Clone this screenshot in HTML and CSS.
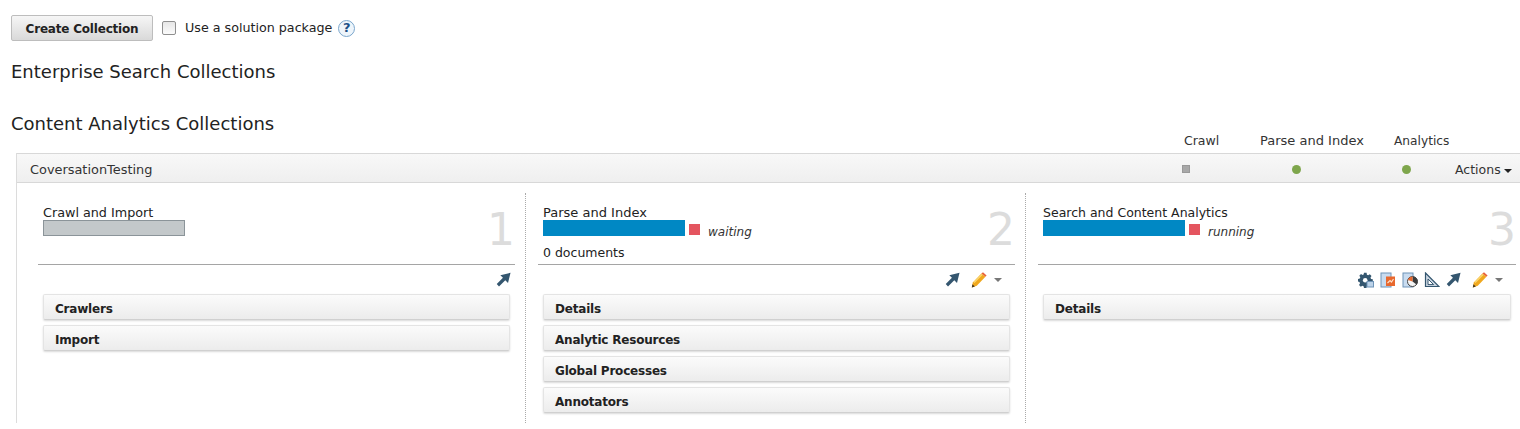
FILE: index.html
```html
<!DOCTYPE html>
<html lang="en">
<head>
<meta charset="utf-8">
<title>Collections</title>
<link rel="stylesheet" href="styles.css">
</head>
<body>
<svg class="defs" width="0" height="0" aria-hidden="true">
  <symbol id="arrow" viewBox="0 0 16 16"><path d="M15.5 .8 L4.6 3.4 L7.4 6.2 L.8 12.9 L3.2 15.4 L9.9 8.7 L12.8 11.6 Z" fill="#34566f"/></symbol>
  <symbol id="pencil" viewBox="0 0 16 16"><path d="M.8 15.4 L1.8 10.4 L10.4 1.4 L14.4 4.8 L5.8 13.8 Z" fill="#f0a81e"/><path d="M10.4 1.4 L12 .3 L15.6 3.4 L14.4 4.8 Z" fill="#e8643c"/><path d="M.8 15.4 L1.4 12.2 L3.9 14.6 Z" fill="#4a3a20"/><path d="M3 10.6 L11 2.6" stroke="#fbd971" stroke-width="1.4"/></symbol>
  <symbol id="gear" viewBox="0 0 16 16"><path d="M6 .8h2.6l.3 1.9 1.3.6 1.6-1 1.7 1.8-1 1.5.5 1.3 1.8.4v2.5l-1.8.3-.5 1.3 1 1.6-1.8 1.8-1.6-1-1.2.5-.4 1.8H6l-.4-1.8-1.3-.5-1.5 1-1.8-1.8 1-1.6-.5-1.3L0 9.5V7l1.8-.4.5-1.3-1-1.5L3 2l1.6 1 1-.5z" fill="#34566f"/><circle cx="7.2" cy="8.2" r="2.3" fill="#fff"/><rect x="9" y="9.5" width="6.5" height="5.5" fill="#bcd2e8" stroke="#6f94b8"/></symbol>
  <symbol id="doc1" viewBox="0 0 16 16"><rect x="1" y="1" width="10" height="14" fill="#c9dcf0" stroke="#6f94b8"/><rect x="6" y="4.5" width="9" height="9.5" fill="#e8682e"/><path d="M7.5 11 L10 8.5 L11.5 10 L13.5 7" stroke="#fde0c8" stroke-width="1.2" fill="none"/></symbol>
  <symbol id="doc2" viewBox="0 0 16 16"><rect x="1" y="1" width="10" height="14" fill="#c9dcf0" stroke="#6f94b8"/><circle cx="10.5" cy="9.5" r="5" fill="#f5f5f5" stroke="#444"/><path d="M10.5 9.5 L10.5 4.5 A5 5 0 0 1 14.5 12.5 Z" fill="#3c3c3c"/><path d="M10.5 9.5 L6 8 A5 5 0 0 1 10.5 4.5 Z" fill="#e8682e"/></symbol>
  <symbol id="triangle" viewBox="0 0 16 16"><path d="M1.5 1 L15 14.5 H1.5 Z" fill="#cbd6e2" stroke="#34566f" stroke-width="1.2"/><path d="M4 7 L9.6 12.6 H4 Z" fill="#fff" stroke="#34566f"/></symbol>
</svg>

<div class="page">
  <div class="toolbar">
    <button class="btn" type="button">Create Collection</button>
    <span class="check"></span>
    <span class="check-label">Use a solution package</span>
    <span class="help">?</span>
  </div>

  <h2 class="heading first">Enterprise Search Collections</h2>
  <h2 class="heading second">Content Analytics Collections</h2>

  <div class="status-labels">
    <span class="sl sl-crawl">Crawl</span>
    <span class="sl sl-parse">Parse and Index</span>
    <span class="sl sl-analytics">Analytics</span>
  </div>

  <div class="panel">
    <div class="panel-head">
      <span class="panel-name">CoversationTesting</span>
      <span class="ind ind-crawl"><i class="square"></i></span>
      <span class="ind ind-parse"><i class="dot"></i></span>
      <span class="ind ind-analytics"><i class="dot"></i></span>
      <span class="actions">Actions<i class="caret-dark"></i></span>
    </div>
    <div class="cols">
      <section class="col">
        <div class="summary">
          <div class="title wide">Crawl and Import</div>
          <div class="bar-row"><div class="bar bar-gray"></div></div>
          <div class="num">1</div>
        </div>
        <div class="tools">
          <svg class="ic arrow"><use href="#arrow"/></svg>
        </div>
        <div class="item">Crawlers</div>
        <div class="item">Import</div>
      </section>
      <section class="col">
        <div class="summary">
          <div class="title wider">Parse and Index</div>
          <div class="bar-row"><div class="bar bar-blue"></div><i class="stop"></i><em>waiting</em></div>
          <div class="docs">0 documents</div>
          <div class="num">2</div>
        </div>
        <div class="tools">
          <svg class="ic arrow"><use href="#arrow"/></svg>
          <svg class="ic pen"><use href="#pencil"/></svg>
          <i class="caret"></i>
        </div>
        <div class="item">Details</div>
        <div class="item">Analytic Resources</div>
        <div class="item">Global Processes</div>
        <div class="item">Annotators</div>
      </section>
      <section class="col">
        <div class="summary">
          <div class="title">Search and Content Analytics</div>
          <div class="bar-row"><div class="bar bar-blue"></div><i class="stop"></i><em>running</em></div>
          <div class="num">3</div>
        </div>
        <div class="tools">
          <svg class="ic tight"><use href="#gear"/></svg>
          <svg class="ic tight"><use href="#doc1"/></svg>
          <svg class="ic tight"><use href="#doc2"/></svg>
          <svg class="ic tight"><use href="#triangle"/></svg>
          <svg class="ic tight arrow"><use href="#arrow"/></svg>
          <svg class="ic pen"><use href="#pencil"/></svg>
          <i class="caret"></i>
        </div>
        <div class="item">Details</div>
      </section>
    </div>
  </div>
</div>
</body>
</html>
```
FILE: styles.css
```css
* { box-sizing: border-box; }
html, body { margin: 0; padding: 0; background: #fff; overflow: hidden; }
body { width: 1520px; height: 429px; font-family: "DejaVu Sans", Verdana, sans-serif; font-size: 12.5px; color: #222; }
.defs { position: absolute; }
.page { padding: 15px 0 0 11px; }

.toolbar { display: flex; align-items: center; height: 26px; }
.btn { width: 142px; height: 26px; padding: 2px 0 0; border: 1px solid #bdbdbd; border-radius: 2px; background: linear-gradient(#f6f6f6, #d9d9d9); font: bold 12px "DejaVu Sans", Verdana, sans-serif; letter-spacing: -.2px; color: #222; }
.check { width: 14px; height: 14px; margin-left: 9px; border: 1px solid #8f8f8f; border-radius: 2px; background: linear-gradient(#e6e6e6, #fbfbfb); }
.check-label { margin-left: 9px; position: relative; top: -1px; font-size: 12.7px; }
.help { width: 17px; height: 17px; margin-left: 6px; border: 1.5px solid #7aa6cc; border-radius: 50%; background: #eef5fb; color: #1a4f86; font-weight: bold; font-size: 13px; line-height: 14px; text-align: center; }

.heading { margin: 0; font-size: 18px; font-weight: normal; color: #222; line-height: 22px; }
.first { margin-top: 20px; }
.second { margin-top: 30px; }

.status-labels { position: relative; height: 18px; }
.sl { position: absolute; top: -2px; line-height: 16px; color: #333; }
.sl-crawl { left: 1173px; }
.sl-parse { left: 1249px; font-size: 13px; }
.sl-analytics { left: 1383px; font-size: 12.2px; }

.panel { margin-left: 5px; width: 1510px; border-left: 1px solid #dcdcdc; }
.panel-head { position: relative; height: 30px; border: solid #d8d8d8; border-width: 1px 0; background: linear-gradient(#f8f8f8, #efefef); line-height: 31px; color: #333; padding-left: 13px; }
.panel-name { font-size: 12.9px; }
.ind { position: absolute; top: 11px; }
.ind-crawl { left: 1165px; }
.ind-parse { left: 1275px; }
.ind-analytics { left: 1385px; }
.square { display: block; width: 8px; height: 8px; background: #a8a8a8; border: 1px solid #999; }
.dot { display: block; width: 9px; height: 9px; border-radius: 50%; background: #7ea64c; }
.actions { position: absolute; left: 1438px; top: 0; line-height: 31px; white-space: nowrap; }
.caret-dark { display: inline-block; margin-left: 3px; vertical-align: 1px; border: 4px solid transparent; border-top-color: #222; border-bottom: 0; }

.cols { display: flex; height: 240px; padding-top: 10px; }
.col { width: 500px; padding: 0 10px 0 12px; position: relative; border-right: 1px dotted #aaa; height: 230px; }
.col:first-child { width: 509px; padding-left: 21px; }
.col:last-child { border-right: 0; }

.summary { position: relative; height: 72px; border-bottom: 1px solid #a5a5a5; padding: 12px 0 0 5px; }
.title { line-height: 15px; color: #222; }
.wide { font-size: 12.75px; }
.wider { font-size: 13px; }
.bar-row { display: flex; align-items: flex-start; height: 18px; }
.bar { width: 142px; height: 16px; }
.bar-gray { background: #c3c8ca; border: 1px solid #8b9499; }
.bar-blue { background: #0088c4; }
.stop { width: 11px; height: 11px; margin: 4px 0 0 4px; background: #e4555f; }
.bar-row em { margin: 4px 0 0 8px; line-height: 16px; font-size: 12px; color: #333; }
.docs { margin-top: 7px; line-height: 16px; }
.num { position: absolute; right: 0; top: 12px; font-size: 44px; line-height: 50px; color: #dcdcdc; }

.tools { display: flex; align-items: center; justify-content: flex-end; height: 29px; padding-right: 4px; }
.ic { width: 16px; height: 16px; display: block; }
.arrow { width: 15px; height: 15px; }
.tight { margin-left: 6px; }
.pen { margin-left: 11px; }
.caret { margin: 0 9px 0 7px; border: 4px solid transparent; border-top-color: #777; border-bottom: 0; }

.item { height: 26px; margin: 0 5px 5px; padding-left: 11px; line-height: 28px; font-size: 12px; letter-spacing: -.2px; font-weight: bold; color: #222; border: 1px solid #e4e4e4; border-bottom-color: #d0d0d0; border-radius: 2px; background: linear-gradient(#fbfbfb, #ececec); box-shadow: 0 1px 2px rgba(0,0,0,.15); }
```
